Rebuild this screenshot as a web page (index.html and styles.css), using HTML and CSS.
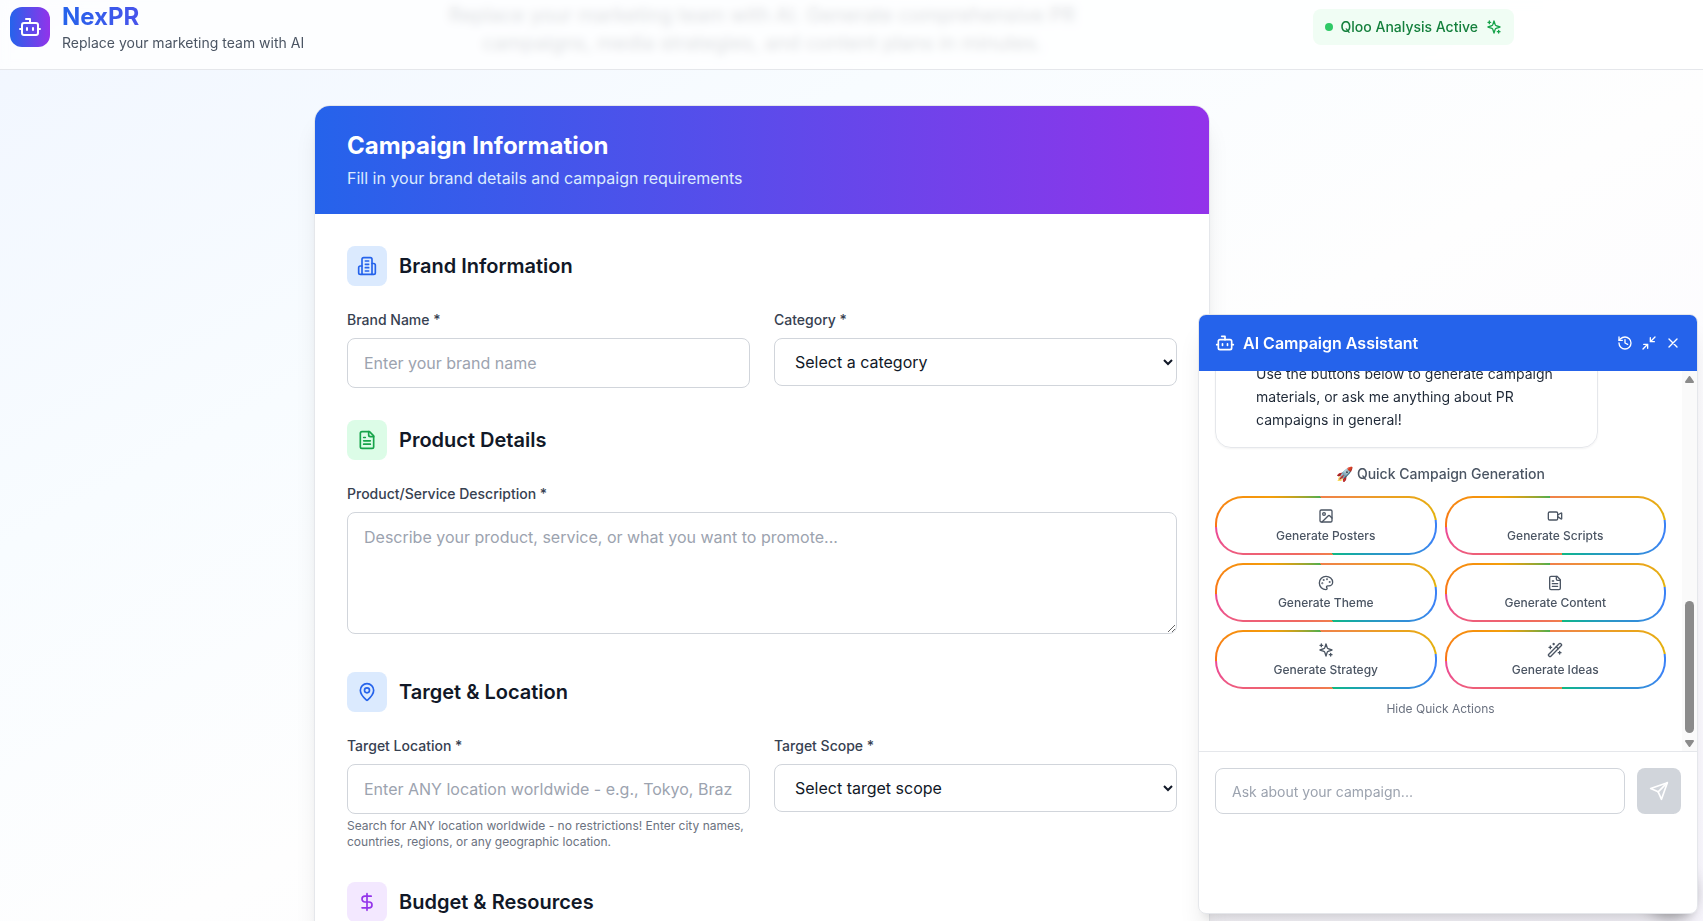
FILE: index.html
```html
<!DOCTYPE html>
<html lang="en">
<head>
<meta charset="utf-8">
<meta name="viewport" content="width=device-width, initial-scale=1">
<title>NexPR</title>
<link rel="stylesheet" href="styles.css">
</head>
<body>
<svg class="sprite" aria-hidden="true">
  <symbol id="bot" viewBox="0 0 24 24"><path d="M12 8V4H8"/><rect width="16" height="12" x="4" y="8" rx="2"/><path d="M2 14h2M20 14h2M15 13v2M9 13v2"/></symbol>
  <symbol id="sparkles" viewBox="0 0 24 24"><path d="m12 3-1.912 5.813a2 2 0 0 1-1.275 1.275L3 12l5.813 1.912a2 2 0 0 1 1.275 1.275L12 21l1.912-5.813a2 2 0 0 1 1.275-1.275L21 12l-5.813-1.912a2 2 0 0 1-1.275-1.275L12 3Z"/><path d="M5 3v4M19 17v4M3 5h4M17 19h4"/></symbol>
  <symbol id="building" viewBox="0 0 24 24"><path d="M6 22V4a2 2 0 0 1 2-2h8a2 2 0 0 1 2 2v18Z"/><path d="M6 12H4a2 2 0 0 0-2 2v6a2 2 0 0 0 2 2h2M18 9h2a2 2 0 0 1 2 2v9a2 2 0 0 1-2 2h-2M10 6h4M10 10h4M10 14h4M10 18h4"/></symbol>
  <symbol id="file" viewBox="0 0 24 24"><path d="M15 2H6a2 2 0 0 0-2 2v16a2 2 0 0 0 2 2h12a2 2 0 0 0 2-2V7Z"/><path d="M14 2v4a2 2 0 0 0 2 2h4M10 9H8M16 13H8M16 17H8"/></symbol>
  <symbol id="pin" viewBox="0 0 24 24"><path d="M20 10c0 4.993-5.539 10.193-7.399 11.799a1 1 0 0 1-1.202 0C9.539 20.193 4 14.993 4 10a8 8 0 0 1 16 0"/><circle cx="12" cy="10" r="3"/></symbol>
  <symbol id="dollar" viewBox="0 0 24 24"><path d="M12 2v20M17 5H9.500a3.500 3.500 0 0 0 0 7h5a3.500 3.500 0 0 1 0 7H6"/></symbol>
  <symbol id="history" viewBox="0 0 24 24"><path d="M3 12a9 9 0 1 0 9-9 9.750 9.750 0 0 0-6.740 2.740L3 8"/><path d="M3 3v5h5M12 7v5l4 2"/></symbol>
  <symbol id="minimize" viewBox="0 0 24 24"><path d="M4 14h6v6M20 10h-6V4M14 10l7-7M3 21l7-7"/></symbol>
  <symbol id="close" viewBox="0 0 24 24"><path d="M18 6 6 18M6 6l12 12"/></symbol>
  <symbol id="image" viewBox="0 0 24 24"><rect width="18" height="18" x="3" y="3" rx="2"/><circle cx="9" cy="9" r="2"/><path d="m21 15-3.086-3.086a2 2 0 0 0-2.828 0L6 21"/></symbol>
  <symbol id="video" viewBox="0 0 24 24"><path d="m16 13 5.223 3.482a.5.5 0 0 0 .777-.416V7.870a.5.5 0 0 0-.752-.432L16 10.500"/><rect x="2" y="6" width="14" height="12" rx="2"/></symbol>
  <symbol id="palette" viewBox="0 0 24 24"><circle cx="13.500" cy="6.500" r=".5"/><circle cx="17.500" cy="10.500" r=".5"/><circle cx="8.500" cy="7.500" r=".5"/><circle cx="6.500" cy="12.500" r=".5"/><path d="M12 2C6.500 2 2 6.500 2 12s4.500 10 10 10c.926 0 1.648-.746 1.648-1.688 0-.437-.18-.835-.437-1.125-.29-.289-.438-.652-.438-1.125a1.640 1.640 0 0 1 1.668-1.668h1.996c3.051 0 5.555-2.503 5.555-5.554C21.965 6.012 17.461 2 12 2z"/></symbol>
  <symbol id="wand" viewBox="0 0 24 24"><path d="m21.640 3.640-1.280-1.280a1.210 1.210 0 0 0-1.720 0L2.360 18.640a1.210 1.210 0 0 0 0 1.720l1.280 1.280a1.200 1.200 0 0 0 1.720 0L21.640 5.360a1.200 1.200 0 0 0 0-1.720"/><path d="m14 7 3 3M5 6v4M19 14v4M10 2v2M7 8H3M21 16h-4M11 3H9"/></symbol>
  <symbol id="send" viewBox="0 0 24 24"><path d="m22 2-7 20-4-9-9-4Z"/><path d="M22 2 11 13"/></symbol>
</svg>

<header class="topbar">
  <div class="topbar-inner">
    <div class="brand">
      <div class="brand-logo"><svg class="icon icon-24"><use href="#bot"/></svg></div>
      <div>
        <div class="brand-name">NexPR</div>
        <div class="brand-tagline">Replace your marketing team with AI</div>
      </div>
    </div>
    <div class="status"><span class="status-dot"></span><span>Qloo Analysis Active</span><svg class="icon icon-16"><use href="#sparkles"/></svg></div>
  </div>
</header>

<main class="page">
  <p class="lead">Replace your marketing team with AI. Generate comprehensive PR campaigns, media strategies, and content plans in minutes.</p>

  <form class="card">
    <div class="card-head">
      <h1 class="card-title">Campaign Information</h1>
      <p class="card-subtitle">Fill in your brand details and campaign requirements</p>
    </div>
    <div class="card-body">
      <section class="section">
        <div class="section-head">
          <span class="badge badge-blue"><svg class="icon icon-20"><use href="#building"/></svg></span>
          <h2 class="section-title">Brand Information</h2>
        </div>
        <div class="columns">
          <div class="field">
            <label class="label" for="brand">Brand Name *</label>
            <input class="control" id="brand" type="text" placeholder="Enter your brand name">
          </div>
          <div class="field">
            <label class="label" for="category">Category *</label>
            <select class="control control-select" id="category"><option>Select a category</option></select>
          </div>
        </div>
      </section>

      <section class="section">
        <div class="section-head">
          <span class="badge badge-green"><svg class="icon icon-20"><use href="#file"/></svg></span>
          <h2 class="section-title">Product Details</h2>
        </div>
        <div class="field field-area">
          <label class="label" for="description">Product/Service Description *</label>
          <textarea class="control" id="description" rows="4" placeholder="Describe your product, service, or what you want to promote..."></textarea>
        </div>
      </section>

      <section class="section">
        <div class="section-head">
          <span class="badge badge-blue"><svg class="icon icon-20"><use href="#pin"/></svg></span>
          <h2 class="section-title">Target &amp; Location</h2>
        </div>
        <div class="columns">
          <div class="field">
            <label class="label" for="location">Target Location *</label>
            <input class="control" id="location" type="text" placeholder="Enter ANY location worldwide - e.g., Tokyo, Brazil, California">
            <p class="hint">Search for ANY location worldwide - no restrictions! Enter city names, countries, regions, or any geographic location.</p>
          </div>
          <div class="field">
            <label class="label" for="scope">Target Scope *</label>
            <select class="control control-select" id="scope"><option>Select target scope</option></select>
          </div>
        </div>
      </section>

      <section class="section">
        <div class="section-head">
          <span class="badge badge-purple"><svg class="icon icon-20"><use href="#dollar"/></svg></span>
          <h2 class="section-title">Budget &amp; Resources</h2>
        </div>
      </section>
    </div>
  </form>
</main>

<button class="launcher" type="button" aria-label="Open assistant"></button>

<aside class="chat">
  <div class="chat-head">
    <svg class="icon icon-20"><use href="#bot"/></svg>
    <h2 class="chat-title">AI Campaign Assistant</h2>
    <button class="icon-button" type="button" aria-label="History"><svg class="icon icon-16"><use href="#history"/></svg></button>
    <button class="icon-button" type="button" aria-label="Minimize"><svg class="icon icon-16"><use href="#minimize"/></svg></button>
    <button class="icon-button" type="button" aria-label="Close"><svg class="icon icon-16"><use href="#close"/></svg></button>
  </div>
  <div class="chat-body">
    <div class="messages">
      <p class="bubble">Use the buttons below to generate campaign materials, or ask me anything about PR campaigns in general!</p>
      <div class="quick-title">🚀 Quick Campaign Generation</div>
      <div class="quick-grid">
        <button class="quick" type="button"><svg class="icon icon-16"><use href="#image"/></svg>Generate Posters</button>
        <button class="quick" type="button"><svg class="icon icon-16"><use href="#video"/></svg>Generate Scripts</button>
        <button class="quick" type="button"><svg class="icon icon-16"><use href="#palette"/></svg>Generate Theme</button>
        <button class="quick" type="button"><svg class="icon icon-16"><use href="#file"/></svg>Generate Content</button>
        <button class="quick" type="button"><svg class="icon icon-16"><use href="#sparkles"/></svg>Generate Strategy</button>
        <button class="quick" type="button"><svg class="icon icon-16"><use href="#wand"/></svg>Generate Ideas</button>
      </div>
      <button class="hide-actions" type="button">Hide Quick Actions</button>
    </div>
    <div class="scrollbar" aria-hidden="true">
      <svg class="scroll-arrow" viewBox="0 0 9 7"><path d="M4.500 1 8 6H1Z"/></svg>
      <div class="scroll-track"><div class="scroll-thumb"></div></div>
      <svg class="scroll-arrow" viewBox="0 0 9 7"><path d="M4.500 6 8 1H1Z"/></svg>
    </div>
  </div>
  <form class="composer">
    <input class="composer-input" type="text" aria-label="Message" placeholder="Ask about your campaign...">
    <button class="send" type="button" aria-label="Send"><svg class="icon icon-20"><use href="#send"/></svg></button>
  </form>
</aside>
</body>
</html>
```
FILE: styles.css
```css
* { box-sizing: border-box; }

body {
  margin: 0;
  height: 100vh;
  overflow: hidden;
  font-family: Inter, "Liberation Sans", sans-serif;
  font-size: 16px;
  line-height: 24px;
  color: #111827;
  background: linear-gradient(to bottom right, #f1f6ff 0%, #f8fcff 30%, #fefefe 55%, #faf8ff 100%);
}

h1, h2, p { margin: 0; }

button, input, select, textarea { font: inherit; color: inherit; }

button {
  border: 0;
  background: none;
  padding: 0;
  cursor: pointer;
}

.sprite {
  position: absolute;
  width: 0;
  height: 0;
}

.icon {
  display: block;
  flex: none;
  fill: none;
  stroke: currentColor;
  stroke-width: 2;
  stroke-linecap: round;
  stroke-linejoin: round;
}

.icon-16 { width: 16px; height: 16px; }
.icon-20 { width: 20px; height: 20px; }
.icon-24 { width: 24px; height: 24px; }

/* Top bar */
.topbar {
  position: fixed;
  top: 0;
  left: 0;
  right: 0;
  z-index: 10;
  border-bottom: 1px solid #e5e7eb;
  background: rgba(255, 255, 255, 0.8);
  backdrop-filter: blur(4px);
}

.topbar-inner {
  max-width: 1524px;
  padding: 1px 10px 16px;
  display: flex;
  align-items: center;
  justify-content: space-between;
}

.brand {
  display: flex;
  align-items: center;
  gap: 12px;
}

.brand-logo {
  width: 40px;
  height: 40px;
  border-radius: 12px;
  display: grid;
  place-items: center;
  color: #fff;
  background: linear-gradient(to right, #2563eb, #9333ea);
}

.brand-name {
  font-size: 24px;
  font-weight: 700;
  line-height: 32px;
  color: transparent;
  background: linear-gradient(to right, #2563eb, #9333ea);
  background-clip: text;
}

.brand-tagline {
  font-size: 14px;
  line-height: 20px;
  color: #4b5563;
}

.status {
  display: flex;
  align-items: center;
  gap: 8px;
  padding: 8px 12px;
  border-radius: 8px;
  font-size: 14px;
  font-weight: 500;
  line-height: 20px;
  color: #15803d;
  background: #f0fdf4;
}

.status-dot {
  width: 8px;
  height: 8px;
  border-radius: 50%;
  background: #2fc966;
}

.status .icon { color: #16a34a; }

/* Page */
.page {
  max-width: 1524px;
  padding: 1px 16px 0;
}

.lead {
  max-width: 672px;
  margin: 0 auto 48px;
  font-size: 20px;
  line-height: 28px;
  text-align: center;
  color: #4b5563;
}

.card {
  max-width: 896px;
  margin: 0 auto;
  border: 1px solid #e5e7eb;
  border-radius: 16px;
  overflow: hidden;
  background: #fff;
  box-shadow: 0 20px 25px -5px rgba(0, 0, 0, 0.1), 0 8px 10px -6px rgba(0, 0, 0, 0.1);
}

.card-head {
  padding: 24px 32px;
  color: #fff;
  background: linear-gradient(to right, #2563eb, #9333ea);
}

.card-title {
  font-size: 24px;
  font-weight: 700;
  line-height: 32px;
}

.card-subtitle {
  margin-top: 4px;
  color: #dbeafe;
}

.card-body {
  padding: 32px;
  display: flex;
  flex-direction: column;
  gap: 32px;
}

.section {
  display: flex;
  flex-direction: column;
  gap: 24px;
}

.section-head {
  display: flex;
  align-items: center;
  gap: 12px;
}

.section-title {
  font-size: 20px;
  font-weight: 600;
  line-height: 28px;
}

.badge {
  width: 40px;
  height: 40px;
  border-radius: 8px;
  display: grid;
  place-items: center;
}

.badge-blue { color: #2563eb; background: #dbeafe; }
.badge-green { color: #16a34a; background: #dcfce7; }
.badge-purple { color: #9333ea; background: #f3e8ff; }

.columns {
  display: grid;
  grid-template-columns: 1fr 1fr;
  gap: 24px;
}

.field-area { padding-bottom: 6px; }

.label {
  display: block;
  margin-bottom: 8px;
  font-size: 14px;
  font-weight: 500;
  line-height: 20px;
  color: #374151;
}

.control {
  display: block;
  width: 100%;
  padding: 12px 16px;
  border: 1px solid #d1d5db;
  border-radius: 8px;
  background: #fff;
}

.control-select { height: 48px; }

.control::placeholder,
.composer-input::placeholder { color: #9ca3af; opacity: 1; }

.hint {
  margin-top: 4px;
  font-size: 12px;
  line-height: 16px;
  color: #6b7280;
}

/* Chat panel */
.launcher {
  position: fixed;
  right: 5px;
  bottom: 10px;
  z-index: 19;
  width: 56px;
  height: 56px;
  border-radius: 50%;
  background: #2563eb;
  box-shadow: 0 10px 15px -3px rgba(0, 0, 0, 0.3);
}

.chat {
  position: fixed;
  right: 5px;
  bottom: 7px;
  z-index: 20;
  width: 500px;
  height: 600px;
  display: flex;
  flex-direction: column;
  border: 1px solid #e5e7eb;
  border-radius: 8px;
  overflow: hidden;
  background: #fff;
  box-shadow: 0 20px 25px -5px rgba(0, 0, 0, 0.1), 0 8px 10px -6px rgba(0, 0, 0, 0.1);
}

.chat-head {
  display: flex;
  align-items: center;
  gap: 8px;
  padding: 16px;
  color: #fff;
  background: #2563eb;
}

.chat-title {
  flex: 1;
  font-size: 16px;
  font-weight: 600;
  line-height: 24px;
}

.chat-body {
  height: 380px;
  display: flex;
}

.messages {
  flex: 1;
  min-width: 0;
  padding: 0 16px 34px;
  display: flex;
  flex-direction: column;
  justify-content: flex-end;
  overflow: hidden;
}

.bubble {
  width: 85%;
  margin-bottom: 16px;
  padding: 16px 16px 16px 40px;
  border: 1px solid #e5e7eb;
  border-radius: 16px;
  font-size: 14px;
  line-height: 23px;
  color: #1f2937;
  box-shadow: 0 1px 2px rgba(0, 0, 0, 0.05);
}

.quick-title {
  margin-bottom: 12px;
  font-size: 14px;
  font-weight: 500;
  line-height: 20px;
  text-align: center;
  color: #4b5563;
}

.quick-grid {
  display: grid;
  grid-template-columns: 1fr 1fr;
  gap: 8px;
}

.quick {
  display: flex;
  flex-direction: column;
  align-items: center;
  gap: 4px;
  padding: 10px 12px 9px;
  border: 2px solid transparent;
  border-radius: 28px;
  font-size: 12px;
  font-weight: 500;
  line-height: 16px;
  color: #4b5563;
  background:
    linear-gradient(#fff, #fff) padding-box,
    conic-gradient(from -11deg,
      #f0804b 0deg, #ee8f3c 56deg, #e9a817 86deg, #e2b30b 98deg,
      #3b82f6 98deg, #3b82f6 108deg, #2f92d0 124deg, #17a8a8 146deg, #10b981 178deg,
      #f0804b 178deg, #f0695f 236deg, #ee5f78 261deg, #ec4899 280deg,
      #f97316 280deg, #f59e0b 308deg, #a8a52c 330deg, #4caf50 360deg) border-box;
}

.hide-actions {
  margin-top: 12px;
  align-self: center;
  font-size: 12px;
  line-height: 16px;
  color: #6b7280;
}

.scrollbar {
  width: 15px;
  padding: 5px 3px 4px;
  display: flex;
  flex-direction: column;
  gap: 7px;
  background: #fafafa;
}

.scroll-arrow {
  width: 9px;
  height: 7px;
  fill: #8b8b8b;
  stroke: #8b8b8b;
  stroke-width: 2;
  stroke-linejoin: round;
}

.scroll-track {
  flex: 1;
  display: flex;
  flex-direction: column;
  justify-content: flex-end;
}

.scroll-thumb {
  height: 38%;
  min-height: 132px;
  border-radius: 5px;
  background: #8b8b8b;
}

.composer {
  flex: 1;
  display: flex;
  align-items: flex-start;
  gap: 12px;
  padding: 16px;
  border-top: 1px solid #e5e7eb;
}

.composer-input {
  flex: 1;
  min-width: 0;
  height: 46px;
  padding: 12px 16px;
  border: 1px solid #d1d5db;
  border-radius: 8px;
  font-size: 14px;
  line-height: 20px;
}

.send {
  width: 44px;
  height: 46px;
  display: grid;
  place-items: center;
  border-radius: 8px;
  color: #fff;
  background: #d1d5db;
}
```
